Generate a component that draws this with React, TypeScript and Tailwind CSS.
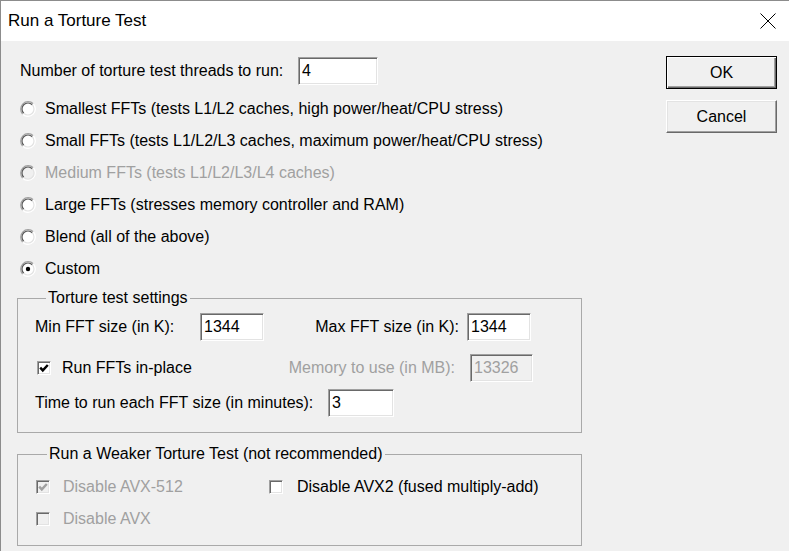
import React from 'react'

const sunken =
  'border border-t-[#a0a0a0] border-l-[#a0a0a0] border-b-white border-r-white shadow-[inset_1px_1px_0_#696969,inset_-1px_-1px_0_#e3e3e3]'

function Radio({ checked = false, disabled = false }: { checked?: boolean; disabled?: boolean }) {
  return (
    <svg width="16" height="16" viewBox="0 0 16 16" className="shrink-0">
      <circle cx="8" cy="8" r="7.5" fill={disabled ? '#f0f0f0' : '#ffffff'} />
      <path d="M2.7 13.3 A7.5 7.5 0 0 1 13.3 2.7" fill="none" stroke="#a0a0a0" strokeWidth="1.2" />
      <path d="M3.75 12.25 A6 6 0 0 1 12.25 3.75" fill="none" stroke="#5a5a5a" strokeWidth="1.2" />
      <path d="M13.3 2.7 A7.5 7.5 0 0 1 2.7 13.3" fill="none" stroke="#ffffff" strokeWidth="1.2" />
      <path d="M12.25 3.75 A6 6 0 0 1 3.75 12.25" fill="none" stroke="#e3e3e3" strokeWidth="1.2" />
      {checked && <circle cx="8" cy="8" r="2.2" fill={disabled ? '#a0a0a0' : '#000000'} />}
    </svg>
  )
}

function Check({ checked = false, disabled = false }: { checked?: boolean; disabled?: boolean }) {
  return (
    <div className={`w-[14px] h-[14px] shrink-0 flex items-center justify-center ${sunken} ${disabled ? 'bg-[#f0f0f0]' : 'bg-white'}`}>
      {checked && (
        <svg width="10" height="10" viewBox="0 0 10 10">
          <path d="M1.2 4.6 L3.8 7.4 L8.8 2" fill="none" stroke={disabled ? '#a0a0a0' : '#000000'} strokeWidth="2.4" />
        </svg>
      )}
    </div>
  )
}

function Field({ value, w, disabled = false }: { value: string; w: string; disabled?: boolean }) {
  return (
    <div className={`${w} h-[28px] shrink-0 flex items-center pl-[3px] ${sunken} ${disabled ? 'bg-[#f0f0f0] text-[#a0a0a0]' : 'bg-white text-black'}`}>
      {value}
    </div>
  )
}

function RadioRow({ label, checked, disabled }: { label: string; checked?: boolean; disabled?: boolean }) {
  return (
    <div className={`h-[32px] flex items-center ${disabled ? 'text-[#a0a0a0]' : 'text-black'}`}>
      <div className="w-[25px]">
        <Radio checked={checked} disabled={disabled} />
      </div>
      <span>{label}</span>
    </div>
  )
}

function Button({ label, isDefault = false }: { label: string; isDefault?: boolean }) {
  return (
    <div
      className={`w-[111px] h-[33px] flex items-center justify-center bg-[#f0f0f0] ${
        isDefault
          ? 'border border-black shadow-[inset_1px_1px_0_#ffffff,inset_-1px_-1px_0_#696969,inset_-2px_-2px_0_#a0a0a0]'
          : 'border border-t-white border-l-white border-b-[#696969] border-r-[#696969] shadow-[inset_-1px_-1px_0_#a0a0a0,inset_1px_1px_0_#e3e3e3]'
      }`}
    >
      {label}
    </div>
  )
}

export default function App() {
  return (
    <div className="w-[789px] h-[551px] overflow-hidden bg-[#f0f0f0] border-l border-t border-[#8c8c8c] font-['Liberation_Sans',Arial,sans-serif] text-[16px] leading-[18px] text-black">
      <div className="h-[40px] bg-white flex items-center justify-between pl-[7px] pr-[13px]">
        <span className="text-[17px]">Run a Torture Test</span>
        <svg width="16" height="16" viewBox="0 0 16 16">
          <path d="M0.5 0.5 L15.5 15.5 M15.5 0.5 L0.5 15.5" stroke="#000" strokeWidth="1" />
        </svg>
      </div>

      <div className="flex">
        <div className="w-[582px] shrink-0 pl-[19px] pt-[16px]">
          <div className="flex items-center h-[28px]">
            <span className="w-[278px] whitespace-nowrap">Number of torture test threads to run:</span>
            <Field value="4" w="w-[80px]" />
          </div>

          <div className="mt-[8px]">
            <RadioRow label="Smallest FFTs (tests L1/L2 caches, high power/heat/CPU stress)" />
            <RadioRow label="Small FFTs (tests L1/L2/L3 caches, maximum power/heat/CPU stress)" />
            <RadioRow label="Medium FFTs (tests L1/L2/L3/L4 caches)" disabled />
            <RadioRow label="Large FFTs (stresses memory controller and RAM)" />
            <RadioRow label="Blend (all of the above)" />
            <RadioRow label="Custom" checked />
          </div>

          <fieldset className="mt-[4px] -ml-[3px] w-[565px] border border-[#a9a9a9] pl-[17px] pt-[6px] pb-[15px]">
            <legend className="ml-[11px] px-[2px]">Torture test settings</legend>
            <div className="flex items-center h-[27px]">
              <span className="w-[165px]">Min FFT size (in K):</span>
              <Field value="1344" w="w-[64px]" />
              <span className="w-[203px] text-right pr-[8px]">Max FFT size (in K):</span>
              <Field value="1344" w="w-[64px]" />
            </div>
            <div className="flex items-center h-[28px] mt-[14px]">
              <div className="w-[27px] pl-[2px]">
                <Check checked />
              </div>
              <span className="w-[408px]">Run FFTs in-place</span>
              <span className="text-[#a0a0a0] w-[0px] flex justify-end whitespace-nowrap relative right-[15px]">
                Memory to use (in MB):
              </span>
              <Field value="13326" w="w-[63px]" disabled />
            </div>
            <div className="flex items-center h-[28px] mt-[7px]">
              <span className="w-[293px] whitespace-nowrap">Time to run each FFT size (in minutes):</span>
              <Field value="3" w="w-[66px]" />
            </div>
          </fieldset>

          <fieldset className="mt-[12px] -ml-[3px] w-[565px] border border-[#a9a9a9] pl-[18px] pt-[8px] pb-[10px]">
            <legend className="ml-[11px] px-[2px]">Run a Weaker Torture Test (not recommended)</legend>
            <div className="flex items-center h-[32px]">
              <div className="w-[27px]">
                <Check checked disabled />
              </div>
              <span className="w-[206px] text-[#a0a0a0]">Disable AVX-512</span>
              <div className="w-[28px]">
                <Check />
              </div>
              <span>Disable AVX2 (fused multiply-add)</span>
            </div>
            <div className="flex items-center h-[32px]">
              <div className="w-[27px]">
                <Check disabled />
              </div>
              <span className="text-[#a0a0a0]">Disable AVX</span>
            </div>
          </fieldset>
        </div>

        <div className="ml-[83px] pt-[15px] flex flex-col gap-[11px]">
          <Button label="OK" isDefault />
          <Button label="Cancel" />
        </div>
      </div>
    </div>
  )
}
